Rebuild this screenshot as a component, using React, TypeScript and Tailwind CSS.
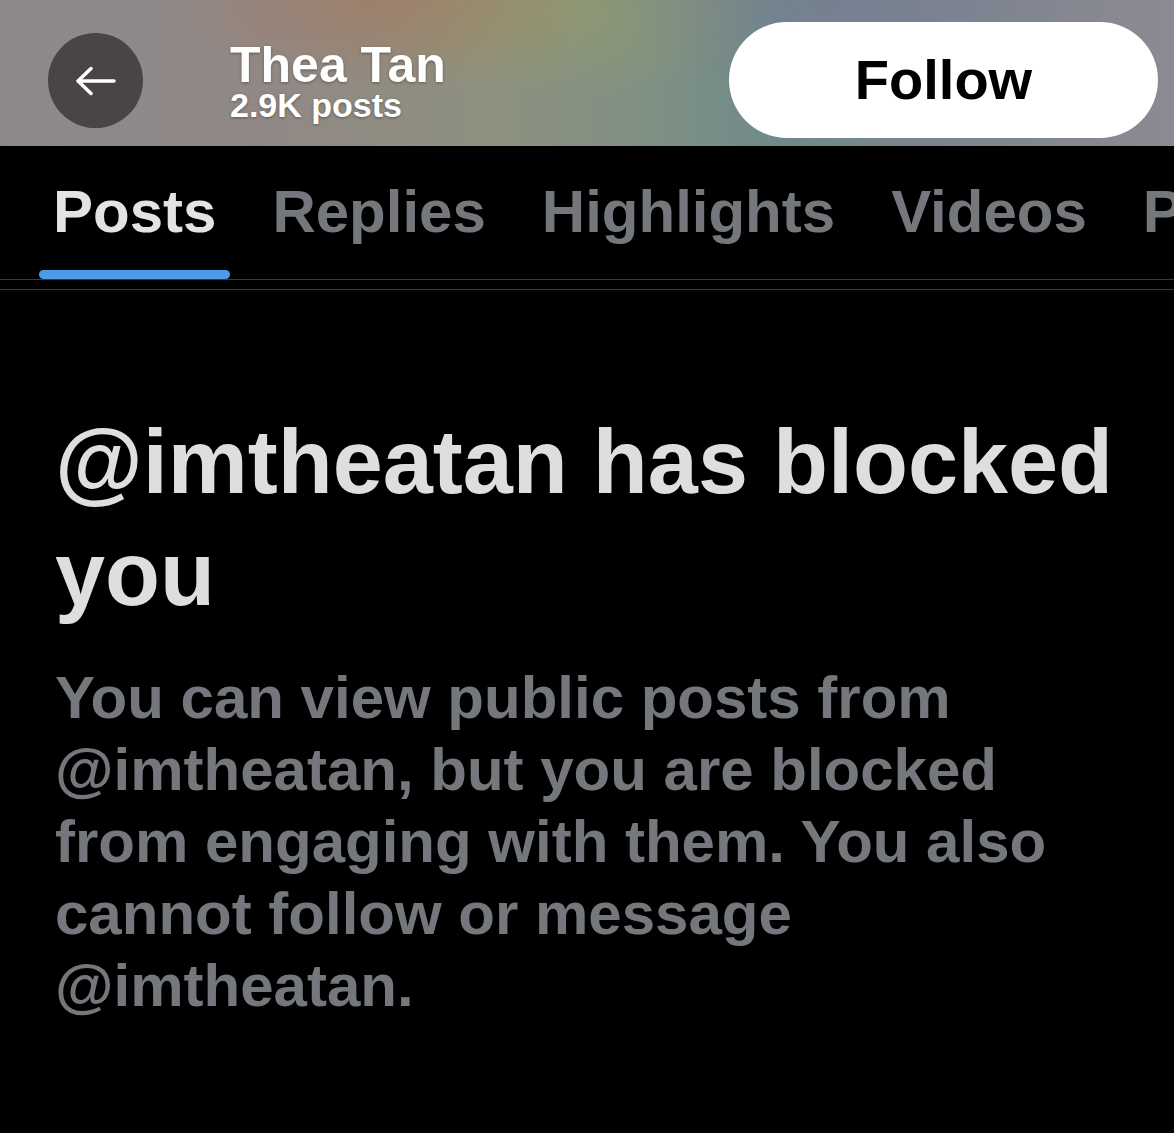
import React from "react";

const tabs = ["Posts", "Replies", "Highlights", "Videos", "Photos"];

const BackArrow = () => (
  <svg width="40" height="32" viewBox="-2 -16 40 32" fill="none">
    <path
      d="M13 -12.5 L0 0 L13 12.5 M0 0 H36"
      stroke="#ffffff"
      strokeWidth="3.5"
      strokeLinecap="round"
      strokeLinejoin="round"
    />
  </svg>
);

const App = () => {
  return (
    <div className="min-h-screen w-full bg-black font-['Liberation_Sans',Arial,sans-serif] overflow-hidden">
      {/* blurred banner header */}
      <div className="h-[146px] flex items-start bg-[radial-gradient(ellipse_220px_90px_at_380px_0px,rgba(170,118,88,0.55),transparent),radial-gradient(ellipse_200px_90px_at_560px_10px,rgba(150,160,100,0.5),transparent),radial-gradient(ellipse_240px_90px_at_830px_0px,rgba(120,118,150,0.45),transparent),linear-gradient(90deg,#8d898b_0%,#918886_22%,#8e907f_42%,#7f9183_55%,#70898a_66%,#7c8590_80%,#8c8a92_100%)]">
        <div className="ml-[48px] mt-[33px] w-[95px] h-[95px] rounded-full bg-[#494445] flex items-center justify-center">
          <BackArrow />
        </div>
        <div className="ml-[87px] mt-[43px] flex flex-col text-white font-bold [text-shadow:0_1px_3px_rgba(0,0,0,0.35)]">
          <div className="text-[50px] leading-[44px]">Thea Tan</div>
          <div className="text-[34px] leading-[36px]">2.9K posts</div>
        </div>
        <div className="ml-auto mr-[16px] mt-[22px] w-[429px] h-[116px] rounded-full bg-white flex items-center justify-center">
          <span className="text-[56px] font-bold text-black leading-none">Follow</span>
        </div>
      </div>

      {/* tabs */}
      <div className="flex gap-[28px] pl-[39px] pt-[36px] whitespace-nowrap overflow-hidden border-b border-[#3a3a3c]">
        {tabs.map((t, i) => (
          <div key={t} className="flex flex-col shrink-0">
            <div
              className={
                i === 0
                  ? "px-[14px] text-[60px] leading-none font-bold text-[#e3e3e3]"
                  : "px-[14px] text-[60px] leading-none font-bold text-[#74777c]"
              }
            >
              {t}
            </div>
            <div
              className={
                i === 0
                  ? "mt-[28px] h-[9px] rounded-full bg-[#4a9be9]"
                  : "mt-[28px] h-[9px]"
              }
            />
          </div>
        ))}
      </div>
      <div className="h-[10px] border-b border-[#3a3a3c]" />

      {/* blocked notice */}
      <div className="px-[55px]">
        <h1 className="mt-[116px] text-[90px] leading-[112px] font-bold text-[#dedede] whitespace-nowrap">
          @imtheatan has blocked
          <br />
          you
        </h1>
        <p className="mt-[32px] text-[60px] leading-[72px] font-bold text-[#74777c] whitespace-nowrap">
          You can view public posts from
          <br />
          @imtheatan, but you are blocked
          <br />
          from engaging with them. You also
          <br />
          cannot follow or message
          <br />
          @imtheatan.
        </p>
      </div>
    </div>
  );
};

export default App;
